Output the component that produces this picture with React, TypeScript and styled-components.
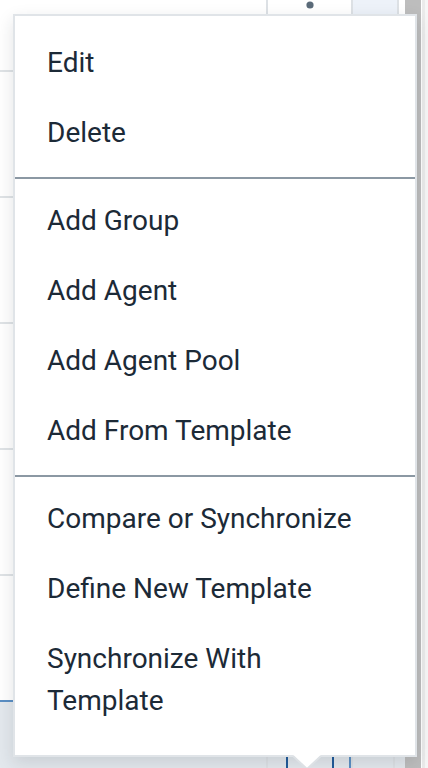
import React from "react";
import styled, { createGlobalStyle } from "styled-components";

const GlobalStyle = createGlobalStyle`
  html, body {
    margin: 0;
    padding: 0;
  }
  body {
    width: 428px;
    height: 768px;
    overflow: hidden;
    background: #ffffff;
    font-family: Roboto, "Noto Sans", sans-serif;
  }
`;

const Page = styled.div`
  position: relative;
  display: flex;
  width: 428px;
  height: 768px;
  overflow: hidden;
`;

const Grid = styled.div`
  display: flex;
  flex-direction: column;
  width: 405px;
  flex: none;
  overflow: hidden;
  background: #ffffff;
`;

const Row = styled.div<{ $h: number; $selected?: boolean; $last?: boolean }>`
  display: flex;
  flex: none;
  height: ${({ $h }) => $h}px;
  box-sizing: border-box;
  background: ${({ $selected }) => ($selected ? "#e3e8ed" : "#ffffff")};
  border-top: ${({ $selected }) => ($selected ? "2px solid #5b8fc4" : "none")};
  border-bottom: ${({ $last, $selected }) =>
    $last || $selected ? "none" : "2px solid #dfe3e6"};
`;

const NameCell = styled.div`
  width: 268px;
  flex: none;
  box-sizing: border-box;
  border-right: 2px solid #dde1e5;
`;

const ActionCell = styled.div`
  position: relative;
  width: 85px;
  flex: none;
  box-sizing: border-box;
  border-right: 2px solid #dde1e5;
  display: flex;
  justify-content: center;
  align-items: flex-start;
`;

const StatusCell = styled.div<{ $tint?: boolean; $mark?: boolean }>`
  width: 44px;
  flex: none;
  box-sizing: border-box;
  background: ${({ $tint }) => ($tint ? "#edf2f9" : "transparent")};
  border-left: ${({ $mark }) => ($mark ? "4px solid #5b8fc4" : "none")};
  margin-left: ${({ $mark }) => ($mark ? "-4px" : "0")};
`;

const EndCell = styled.div`
  flex: 1;
  border-left: 2px solid #dde1e5;
`;

const KebabButton = styled.div`
  margin-top: 40px;
  width: 48px;
  height: 48px;
  box-sizing: border-box;
  border: 2px solid #1f5a99;
  border-radius: 2px;
`;

const Gutter = styled.div`
  display: flex;
  flex: 1;
`;

const Track = styled.div`
  width: 16px;
  background: #bdbdbd;
`;

const Edge = styled.div`
  flex: 1;
  background: #f6f6f6;
  border-left: 1px solid #ffffff;
  box-shadow: inset 3px 0 0 #ebebeb;
`;

const Menu = styled.div`
  position: absolute;
  left: 13px;
  top: 14px;
  width: 404px;
  box-sizing: border-box;
  background: #ffffff;
  border: 2px solid #e0e4e8;
  padding: 12px 0 19px;
  box-shadow: 0 6px 16px rgba(30, 40, 50, 0.13);
`;

const Item = styled.div`
  padding: 14px 50px 14px 32px;
  font-size: 28px;
  line-height: 42px;
  color: #1c2a37;
  font-weight: 400;
`;

const Divider = styled.div`
  height: 2px;
  background: #8b98a3;
  margin: 9px 0 7px;
`;

const Pointer = styled.svg`
  position: absolute;
  left: 293px;
  top: 755px;
`;

const Kebab = () => (
  <svg width="12" height="10" viewBox="0 0 12 10">
    <circle cx="6" cy="-13" r="3.6" fill="#5b6b79" />
    <circle cx="6" cy="5" r="3.6" fill="#5b6b79" />
  </svg>
);

const sections = [
  ["Edit", "Delete"],
  ["Add Group", "Add Agent", "Add Agent Pool", "Add From Template"],
  ["Compare or Synchronize", "Define New Template", "Synchronize With Template"],
];

const rows = [72, 126, 126, 126, 126, 124];

export default function App() {
  return (
    <>
      <GlobalStyle />
      <Page>
        <Grid>
          {rows.map((h, i) => (
            <Row key={i} $h={h} $last={i === rows.length - 1}>
              <NameCell />
              <ActionCell>{i === 0 && <Kebab />}</ActionCell>
              <StatusCell $tint={i === 0} />
              <EndCell />
            </Row>
          ))}
          <Row $h={80} $selected>
            <NameCell />
            <ActionCell>
              <KebabButton />
            </ActionCell>
            <StatusCell $mark />
            <EndCell />
          </Row>
        </Grid>
        <Gutter>
          <Track />
          <Edge />
        </Gutter>

        <Menu>
          {sections.map((items, s) => (
            <React.Fragment key={s}>
              {s > 0 && <Divider />}
              {items.map((label) => (
                <Item key={label}>{label}</Item>
              ))}
            </React.Fragment>
          ))}
        </Menu>
        <Pointer width="28" height="16" viewBox="0 0 28 16">
          <polygon points="0,0 14,14 28,0" fill="#ffffff" />
          <polyline points="0,1 14,14 28,1" fill="none" stroke="#dde1e5" strokeWidth="2" />
        </Pointer>
      </Page>
    </>
  );
}
